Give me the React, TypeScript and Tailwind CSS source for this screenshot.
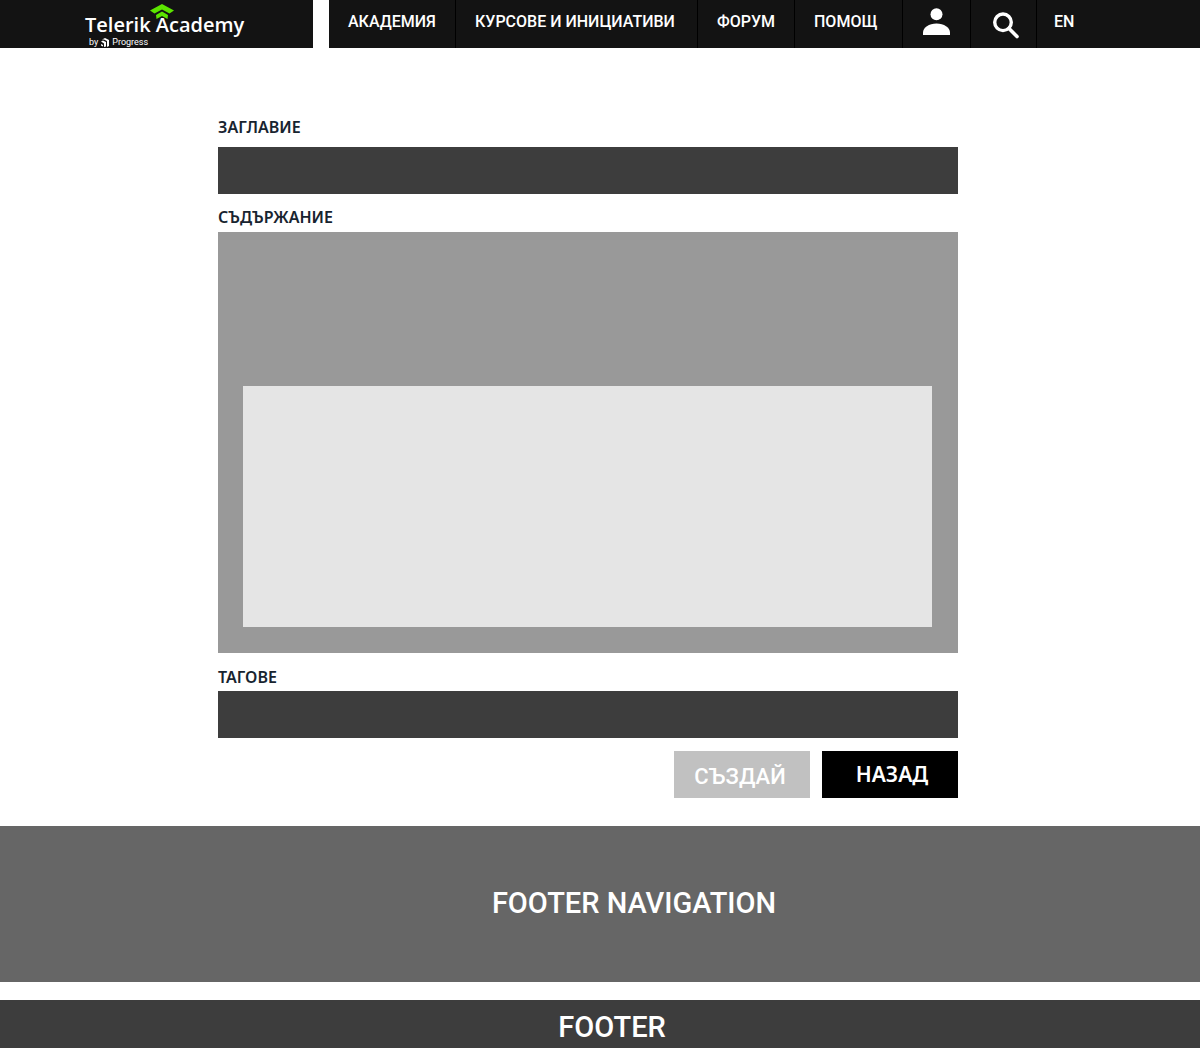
import React from 'react';

function Logo() {
  return (
    <a
      href="#"
      aria-label="Telerik Academy by Progress"
      className="relative block h-12 w-[313px] shrink-0 bg-[#131313] pl-[85px] pt-[13px] text-white"
    >
      <svg className="absolute left-[149px] top-1" width="26" height="16" viewBox="0 0 26 16" fill="#5ce500" aria-hidden="true">
        <path d="M13 0 25 6.500 20.500 9.500 13 5.500 5.500 9.500 1 6.500Z" />
        <path d="M13 7.500 19 11 18.500 15 13 12 7.500 15 7 11Z" />
      </svg>
      <span className="relative block whitespace-nowrap font-['Open_Sans'] text-[20px] font-semibold leading-6">Telerik Academy</span>
      <span className="flex items-center gap-[3px] pl-1 font-['Roboto'] text-[9px] leading-[10px]">
        by
        <svg width="8" height="9" viewBox="0 0 8 9" fill="#fff" aria-hidden="true">
          <path d="M1 1.500 4 0 8 2V8L6 9V3L3 1.500ZM0 3.500 2 2.500 5 4V8.500L3 9V5.500ZM0 6 2 7V8.500L0 7.500Z" />
        </svg>
        Progress
      </span>
    </a>
  );
}

const item = 'flex shrink-0 border-r border-black';
const textItem = 'pl-[19px] pt-3 leading-5 whitespace-nowrap';

function Header() {
  return (
    <header className="flex gap-4">
      <Logo />
      <nav className="flex h-12 min-w-0 flex-1 bg-[#131313] font-['Roboto'] text-[16px] font-medium text-white">
        <a href="#" className={`${item} ${textItem} w-[127px]`}>АКАДЕМИЯ</a>
        <a href="#" className={`${item} ${textItem} w-[242px]`}>КУРСОВЕ И ИНИЦИАТИВИ</a>
        <a href="#" className={`${item} ${textItem} w-[97px]`}>ФОРУМ</a>
        <a href="#" className={`${item} ${textItem} w-[108px]`}>ПОМОЩ</a>
        <a href="#" aria-label="Профил" className={`${item} w-[68px] justify-center pt-2`}>
          <svg width="28" height="28" viewBox="0 0 28 28" fill="#fff" aria-hidden="true">
            <circle cx="13.500" cy="6.200" r="6" />
            <path d="M0 27V24.500C0 19.500 6 15.500 13.500 15.500S27 19.500 27 24.500V27Z" />
          </svg>
        </a>
        <button type="button" aria-label="Търсене" className={`${item} w-[66px] justify-center pl-1 pt-3`}>
          <svg width="28" height="28" viewBox="0 0 28 28" fill="none" stroke="#fff" aria-hidden="true">
            <circle cx="11" cy="10.300" r="8.300" strokeWidth="3.400" />
            <path d="M17 16.500 25 24.500" strokeWidth="3.600" strokeLinecap="round" />
          </svg>
        </button>
        <a href="#" className="pl-[17px] pt-3 leading-5">EN</a>
      </nav>
    </header>
  );
}

const label = "block font-['Noto_Sans'] text-[16px] font-semibold leading-6 text-[#182430]";
const field = 'block h-[47px] w-full bg-[#3d3d3d] px-4 text-white outline-none';

export default function App() {
  return (
    <div className="bg-white">
      <Header />
      <main className="pb-7 pr-6 pt-[67px]">
        <form className="mx-auto max-w-[740px]">
          <label htmlFor="title" className={`${label} mb-2`}>ЗАГЛАВИЕ</label>
          <input id="title" type="text" className={field} />
          <label htmlFor="content" className={`${label} mb-[3px] mt-[11px]`}>СЪДЪРЖАНИЕ</label>
          <div className="bg-[#999999] pb-[26px] pl-[25px] pr-[26px] pt-[154px]">
            <textarea id="content" className="block h-[241px] w-full resize-none bg-[#e5e5e5] p-4 outline-none" />
          </div>
          <label htmlFor="tags" className={`${label} mb-[2px] mt-3`}>ТАГОВЕ</label>
          <input id="tags" type="text" className={field} />
          <div className="mt-[13px] flex justify-end gap-3 font-medium text-white">
            <button type="submit" className="h-[47px] w-[136px] bg-[#c1c1c1] pr-1 pt-[3px] font-['Roboto'] text-[22px]">СЪЗДАЙ</button>
            <button type="button" className="h-[47px] w-[136px] bg-black pl-1 font-['Noto_Sans'] text-[21px] font-semibold">НАЗАД</button>
          </div>
        </form>
      </main>
      <section className="flex h-[156px] items-center justify-center bg-[#666666] pl-[68px] font-['Roboto'] text-[29px] font-medium text-white">
        FOOTER NAVIGATION
      </section>
      <footer className="mt-[18px] flex h-12 items-center justify-center bg-[#3d3d3d] pl-6 pt-[7px] font-['Roboto'] text-[29px] font-medium text-white">
        FOOTER
      </footer>
    </div>
  );
}
